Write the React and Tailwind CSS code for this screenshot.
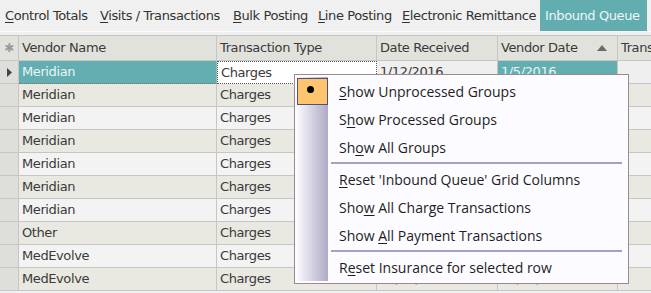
import React from "react";

const tabs = [
  { label: "Control Totals", key: "C", w: "w-[95px]" },
  { label: "Visits / Transactions", key: "V", w: "w-[133px]" },
  { label: "Bulk Posting", key: "B", w: "w-[85px]" },
  { label: "Line Posting", key: "L", w: "w-[84px]" },
  { label: "Electronic Remittance", key: "E", w: "w-[143px]" },
];

const rows = [
  { vendor: "Meridian", type: "Charges", recv: "1/12/2016", vdate: "1/5/2016" },
  { vendor: "Meridian", type: "Charges", recv: "1/12/2016", vdate: "1/5/2016" },
  { vendor: "Meridian", type: "Charges", recv: "1/12/2016", vdate: "1/5/2016" },
  { vendor: "Meridian", type: "Charges", recv: "1/12/2016", vdate: "1/5/2016" },
  { vendor: "Meridian", type: "Charges", recv: "1/12/2016", vdate: "1/5/2016" },
  { vendor: "Meridian", type: "Charges", recv: "1/12/2016", vdate: "1/5/2016" },
  { vendor: "Meridian", type: "Charges", recv: "1/12/2016", vdate: "1/5/2016" },
  { vendor: "Other", type: "Charges", recv: "12/18/2015", vdate: "12/18/2015" },
  { vendor: "MedEvolve", type: "Charges", recv: "12/18/2015", vdate: "12/18/2015" },
  { vendor: "MedEvolve", type: "Charges", recv: "12/18/2015", vdate: "12/18/2015" },
];

// label with one underlined access key letter at index i
function Access({ text, i }) {
  return (
    <span>
      {text.slice(0, i)}
      <span className="underline underline-offset-2">{text[i]}</span>
      {text.slice(i + 1)}
    </span>
  );
}

const menuItems = [
  { text: "Show Unprocessed Groups", i: 0, checked: true },
  { text: "Show Processed Groups", i: 1 },
  { text: "Show All Groups", i: 2 },
  { sep: true },
  { text: "Reset 'Inbound Queue' Grid Columns", i: 0 },
  { text: "Show All Charge Transactions", i: 3 },
  { text: "Show All Payment Transactions", i: 5 },
  { sep: true },
  { text: "Reset Insurance for selected row", i: 1 },
];

const cols = "grid grid-cols-[19px_198px_160px_121px_120px_1fr]";

export default function App() {
  return (
    <div className="relative w-[651px] h-[293px] overflow-hidden bg-[#f0f0f0] font-['DejaVu_Sans',sans-serif] text-[#333]">
      {/* tab strip */}
      <div className="flex h-[31px] items-stretch text-[13px] tracking-[-0.4px]">
        {tabs.map((t) => (
          <div key={t.label} className={`${t.w} flex items-center pl-[5px] whitespace-nowrap`}>
            <Access text={t.label} i={0} />
          </div>
        ))}
        <div className="w-[107px] flex items-center pl-[5px] bg-[#62adb0] text-[#eef7f7] whitespace-nowrap">
          Inbound Queue
        </div>
      </div>
      <div className="h-[4px] border-t border-[#fafafa]" />

      {/* grid */}
      <div className="text-[13px] tracking-[-0.4px] text-[#3a3a3a]">
        <div className={`${cols} h-[26px] border-t border-[#c6c6c6] bg-[#e2e2dc]`}>
          <div className="border-r border-b border-[#c6c6c6] flex items-center justify-center text-[#9a9a9a] text-[12px]">✱</div>
          <div className="border-r border-b border-[#c6c6c6] flex items-center pl-[3px]">Vendor Name</div>
          <div className="border-r border-b border-[#c6c6c6] flex items-center pl-[3px]">Transaction Type</div>
          <div className="border-r border-b border-[#c6c6c6] flex items-center pl-[3px]">Date Received</div>
          <div className="border-r border-b border-[#c6c6c6] flex items-center pl-[3px] pr-[10px] justify-between">
            <span>Vendor Date</span>
            <svg width="10" height="6" viewBox="0 0 10 6"><path d="M0 6 L5 0 L10 6 Z" fill="#6b6b6b" /></svg>
          </div>
          <div className="border-b border-[#c6c6c6] flex items-center pl-[3px] whitespace-nowrap overflow-hidden">Transaction</div>
        </div>

        {rows.map((r, idx) => {
          const sel = idx === 0;
          const bg = idx % 2 === 1 ? "bg-[#e9e9e1]" : "bg-[#f3f3f3]";
          return (
            <div key={idx} className={`${cols} h-[23px]`}>
              <div className="bg-[#dededa] border-r border-b border-[#c6c6c6] flex items-center justify-center">
                {sel && (
                  <svg width="5" height="9" viewBox="0 0 5 9"><path d="M0 0 L5 4.5 L0 9 Z" fill="#444" /></svg>
                )}
              </div>
              <div className={`${sel ? "bg-[#63aeb1] text-[#eaf5f5] border-b-[#8a6b6b] border-dotted" : bg} border-r border-b border-[#c6c6c6] flex items-center pl-[3px]`}>
                {r.vendor}
              </div>
              <div className={`${sel ? "bg-white border-dotted border border-[#555]" : `${bg} border-r border-b border-[#c6c6c6]`} flex items-center pl-[3px]`}>
                {r.type}
              </div>
              <div className={`${sel ? "bg-[#efefef]" : bg} border-r border-b border-[#c6c6c6] flex items-center pl-[3px]`}>
                {r.recv}
              </div>
              <div className={`${sel ? "bg-[#63aeb1] text-[#eaf5f5]" : bg} border-r border-b border-[#c6c6c6] flex items-center pl-[3px]`}>
                {r.vdate}
              </div>
              <div className={`${sel ? "bg-[#efefef]" : bg} border-b border-[#c6c6c6]`} />
            </div>
          );
        })}
      </div>

      {/* context menu */}
      <div className="absolute left-[294px] top-[74px] w-[335px] h-[210px] border border-[#9c8a8c] bg-[#fcfbff] p-[2px] font-['Open_Sans',sans-serif] text-[14px] text-[#1e1e1e]">
        <div className="relative h-full">
          <div className="absolute left-0 top-0 bottom-0 w-[31px] bg-gradient-to-r from-[#fafafd] to-[#aeaac6]" />
          <div className="relative flex flex-col">
            {menuItems.map((m, k) =>
              m.sep ? (
                <div key={k} className="h-[4px] flex items-center pl-[34px] pr-[4px]">
                  <div className="h-[2px] w-full bg-[#a4a2c0]" />
                </div>
              ) : (
                <div key={k} className="h-[28px] flex items-center">
                  <div className="w-[42px] h-full flex items-center">
                    {m.checked && (
                      <div className="w-[31px] h-[27px] bg-[#ffc56e] border border-[#50507a] flex items-center justify-center">
                        <div className="w-[7px] h-[7px] rounded-full bg-black -ml-[4px] -mt-[4px]" />
                      </div>
                    )}
                  </div>
                  <span className="whitespace-nowrap">
                    <Access text={m.text} i={m.i} />
                  </span>
                </div>
              )
            )}
          </div>
        </div>
      </div>
    </div>
  );
}
